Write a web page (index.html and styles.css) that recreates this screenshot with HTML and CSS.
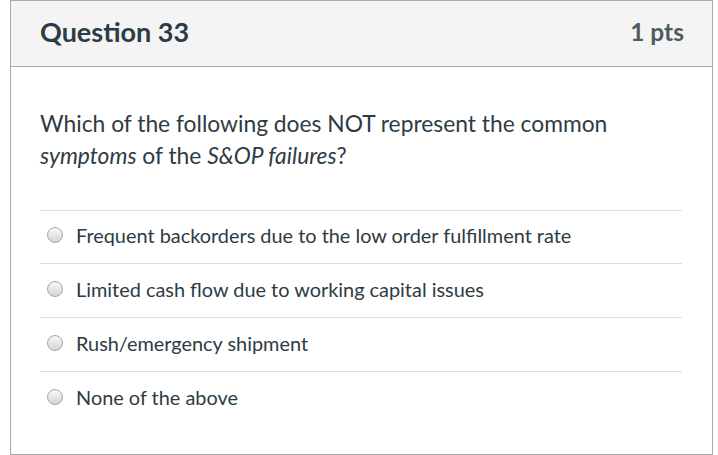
FILE: index.html
```html
<!DOCTYPE html>
<html>
<head>
<meta charset="utf-8">
<link rel="stylesheet" href="styles.css">
</head>
<body>
<div class="quiz">
  <div class="header">
    <h2 class="title">Question 33</h2>
    <span class="pts">1 pts</span>
  </div>
  <div class="content">
    <p class="question">Which of the following does NOT represent the common <em>symptoms</em> of the <em>S&amp;OP failures</em>?</p>
    <div class="answers">
      <label class="answer"><span class="radio"></span><span class="label">Frequent backorders due to the low order fulfillment rate</span></label>
      <label class="answer"><span class="radio"></span><span class="label">Limited cash flow due to working capital issues</span></label>
      <label class="answer"><span class="radio"></span><span class="label">Rush/emergency shipment</span></label>
      <label class="answer"><span class="radio"></span><span class="label">None of the above</span></label>
    </div>
  </div>
</div>
</body>
</html>
```
FILE: styles.css
```css
html, body {
  margin: 0;
  padding: 0;
  background: #fff;
}
body {
  font-family: Lato, "Open Sans", sans-serif;
  color: #2d3b45;
}
.quiz {
  margin-left: 10px;
  width: 703px;
  height: 455px;
  box-sizing: border-box;
  border: 1px solid #aaaaaa;
  border-bottom: none;
}
.header {
  height: 65px;
  background: #f4f4f4;
  border-bottom: 1px solid #aaaaaa;
  display: flex;
  align-items: center;
  justify-content: space-between;
  padding: 0 28px 0 29px;
}
.title {
  margin: 0 0 4px 0;
  font-size: 27px;
  font-weight: 700;
  color: #2d3b45;
}
.pts {
  margin-bottom: 4px;
  font-size: 24.5px;
  font-weight: 700;
  color: #4f5b62;
}
.content {
  padding: 40px 30px 0 29px;
  height: 388px;
  box-sizing: border-box;
  border-bottom: 1px solid #aaaaaa;
}
.question {
  margin: 0 0 39px 0;
  font-size: 22.8px;
  line-height: 32px;
}
.question em {
  font-style: italic;
}
.answers {
  display: flex;
  flex-direction: column;
}
.answer {
  display: flex;
  align-items: center;
  height: 53px;
  padding-bottom: 4px;
  box-sizing: border-box;
  border-top: 1px solid #dddddd;
}
.answer + .answer {
  height: 54px;
}
.radio {
  width: 14px;
  height: 14px;
  border-radius: 50%;
  border: 1px solid #a6a6a6;
  background: linear-gradient(#f8f8f8, #d4d4d4);
  margin: 0 13px 0 7px;
  flex: none;
}
.label {
  font-size: 19.9px;
}
```
